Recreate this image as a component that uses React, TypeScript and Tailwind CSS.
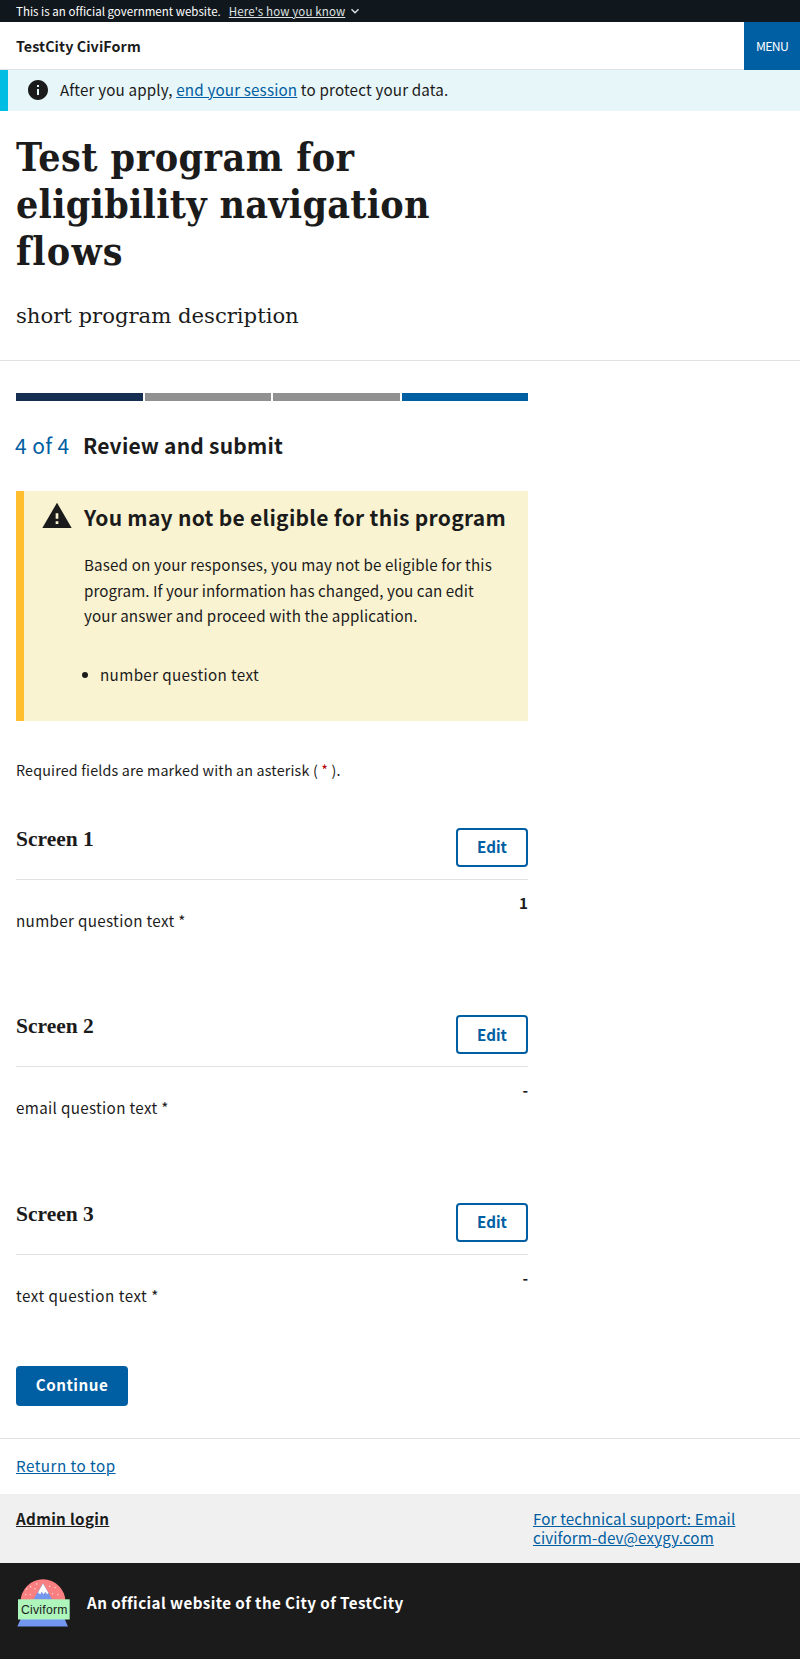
import type { ReactNode } from "react";

const sans = "font-['Noto_Sans_CJK_SC',sans-serif]";

function Rule() {
  return <div className="h-px bg-[#dfe1e2]" />;
}

function InfoIcon() {
  return (
    <svg className="h-6 w-6 shrink-0" viewBox="0 0 24 24" fill="#1b1b1b">
      <path d="M12 2C6.48 2 2 6.48 2 12s4.48 10 10 10 10-4.48 10-10S17.52 2 12 2zm1 15h-2v-6h2v6zm0-8h-2V7h2v2z" />
    </svg>
  );
}

function WarningIcon() {
  return (
    <svg className="h-8 w-8 shrink-0" viewBox="0 0 24 24" fill="#1b1b1b">
      <path d="M1 21h22L12 2 1 21zm12-3h-2v-2h2v2zm0-4h-2v-4h2v4z" />
    </svg>
  );
}

function Logo() {
  return (
    <svg className="h-[48px] w-[54px] shrink-0" viewBox="0 0 54 48">
      <circle cx="26" cy="22.8" r="22.5" fill="#fa7f81" />
      <path d="M26 4.2 L35.2 20.5 H16.4 Z" fill="#7396f0" />
      <path
        d="M26 4.2 L31.6 14 L30 15.4 L28.4 13 L26.6 15.6 L24.8 13 L23.2 15.6 L20.8 13.6 Z"
        fill="#fff"
        stroke="#8a8f9c"
        strokeWidth=".3"
      />
      <g fill="#fff" fillOpacity=".8">
        <circle cx="13.7" cy="7.7" r=".7" />
        <circle cx="19.7" cy="5" r=".7" />
        <circle cx="18" cy="9.7" r=".7" />
        <circle cx="9.7" cy="10" r=".7" />
        <circle cx="8.7" cy="15.6" r=".7" />
        <circle cx="13.3" cy="15.6" r=".7" />
        <circle cx="32.6" cy="7.3" r=".7" />
        <circle cx="38.3" cy="8.6" r=".7" />
        <circle cx="35.5" cy="14.6" r=".7" />
        <circle cx="41" cy="15.6" r=".7" />
      </g>
      <path d="M3.7 40 H47.7 L51 47.6 H0.3 Z" fill="#7396f0" />
      <rect x="1" y="20.3" width="51.7" height="20.2" fill="#adf5bb" />
      <text x="3.9" y="35.3" fontSize="12.2" fill="#1b1b1b" textLength="46.6" fontFamily="Liberation Sans, sans-serif">
        Civiform
      </text>
    </svg>
  );
}

function Link({ children, className = "" }: { children: ReactNode; className?: string }) {
  return (
    <a href="#" className={`text-[#005ea2] underline underline-offset-[1px] decoration-1 ${className}`}>
      {children}
    </a>
  );
}

function Section({ title, question, answer }: { title: string; question: ReactNode; answer: string }) {
  return (
    <section className="h-[187.4px]">
      <div className="flex h-[51px] items-start justify-between">
        <h3 className="font-['Liberation_Serif',serif] text-[21.5px] leading-[22px] font-bold">{title}</h3>
        <button className="h-[39px] w-[72px] rounded-[4px] border-2 border-[#005ea2] pb-px text-[15.2px] leading-none font-bold text-[#005ea2]">
          Edit
        </button>
      </div>
      <Rule />
      <div className="flex justify-between text-[15.2px] leading-[22px]">
        <p className="pt-[29px]">{question}</p>
        <p className="pt-[11px] font-bold">{answer}</p>
      </div>
    </section>
  );
}

export default function App() {
  return (
    <div className="min-h-[1659px] bg-white">
      <div className={`w-[800px] text-[15.2px] text-[#1b1b1b] ${sans}`}>
        <div className="flex h-[22px] items-center bg-[#11181d] px-4 text-[11.5px] leading-[22px] text-white">
          <span className="tracking-[0.02px]">This is an official government website.</span>
          <span className="ml-2 tracking-[0.13px] text-[#dfe1e2] underline decoration-1 underline-offset-[1px]">
            Here's how you know
          </span>
          <svg className="ml-[5px] h-2 w-2.5" viewBox="0 0 10 8" fill="none" stroke="#dfe1e2" strokeWidth="1.4">
            <path d="M1.5 2.2 L5 5.7 L8.5 2.2" />
          </svg>
        </div>

        <header className="flex h-12 justify-between">
          <div className="flex flex-1 items-center border-b border-[#dfe1e2] pl-4 text-[14.3px] font-bold tracking-[0.08px]">
            TestCity CiviForm
          </div>
          <button className="w-14 bg-[#005ea2] text-[12.2px] tracking-[-0.65px] text-white">MENU</button>
        </header>

        <div className="flex h-[41px] items-center border-l-8 border-[#00bde3] bg-[#e7f6f8] pb-px pl-[18px]">
          <InfoIcon />
          <p className="ml-[10px] pb-[2px] leading-[24px] tracking-[0.16px]">
            After you apply, <Link>end your session</Link> to protect your data.
          </p>
        </div>

        <div className="h-[249px] pt-[23px] pl-4">
          <h1 className="font-['DejaVu_Serif_Condensed','DejaVu_Serif',serif] text-[39px] leading-[46.85px] font-bold font-stretch-condensed">
            <span className="tracking-[0.5px]">Test program for</span>
            <br />
            <span className="tracking-[0.27px]">eligibility navigation</span>
            <br />
            <span className="tracking-[1.2px]">flows</span>
          </h1>
          <p className="mt-[25px] font-['DejaVu_Serif',serif] text-[21.2px] leading-[32px] tracking-[-0.02px]">
            short program description
          </p>
        </div>
        <Rule />

        <main className="h-[1077px] w-[528px] pt-8 pl-4">
          <div className="grid h-2 grid-cols-4 gap-[2px]">
            <div className="bg-[#162e51]" />
            <div className="bg-[#919191]" />
            <div className="bg-[#919191]" />
            <div className="bg-[#005ea2]" />
          </div>
          <h2 className="mt-[28px] flex h-[32px] text-[21px] leading-[32px] font-bold">
            <span className="-ml-px w-[68px] font-normal tracking-[0.4px] text-[#005ea2]">4 of 4</span>
            <span className="tracking-[0.2px]">Review and submit</span>
          </h2>

          <div className="mt-[30px] flex h-[230px] border-l-8 border-[#ffbe2e] bg-[#faf3d1] pt-[9px] pl-[17px]">
            <WarningIcon />
            <div className="ml-[11px]">
              <h3 className="-mt-px text-[21px] leading-[36px] font-bold tracking-[0.28px] whitespace-nowrap">
                You may not be eligible for this program
              </h3>
              <p className="mt-[17px] w-[420px] leading-[25.5px]">
                <span className="tracking-[0.13px]">Based on your responses, you may not be eligible for this</span>
                <br />
                <span className="tracking-[0.04px]">program. If your information has changed, you can edit</span>
                <br />
                <span className="tracking-[0.12px]">your answer and proceed with the application.</span>
              </p>
              <ul className="mt-[33px] leading-[25.5px]">
                <li className="flex items-center tracking-[0.36px]">
                  <span className="mt-[2px] mr-[12px] -ml-[2px] h-[6px] w-[6px] rounded-full bg-[#1b1b1b]" />
                  number question text
                </li>
              </ul>
            </div>
          </div>

          <p className="mt-[37px] mb-[46px] h-[24px] text-[14.3px] leading-[24px] tracking-[0.17px]">
            Required fields are marked with an asterisk ( <span className="text-[#b50909]">*</span> ).
          </p>

          <Section
            title="Screen 1"
            question={<span className="tracking-[0.33px]">number question text *</span>}
            answer="1"
          />
          <Section
            title="Screen 2"
            question={<span className="tracking-[0.33px]">email question text *</span>}
            answer="-"
          />
          <Section
            title="Screen 3"
            question={<span className="tracking-[0.5px]">text question text *</span>}
            answer="-"
          />

          <button className="-mt-[24px] block h-10 w-28 rounded-[4px] bg-[#005ea2] pb-[3px] text-[15.2px] leading-none font-bold tracking-[0.5px] text-white">
            Continue
          </button>
        </main>

        <Rule />
        <div className="h-[55px] pt-[14px] pl-4 leading-[24px]">
          <Link className="tracking-[0.47px]">Return to top</Link>
        </div>
        <div className="flex h-[69px] bg-[#f0f0f0] pt-[15px] pl-4 leading-[19px]">
          <a
            href="#"
            className="w-[517px] font-bold tracking-[0.33px] underline decoration-1 underline-offset-[1px]"
          >
            Admin login
          </a>
          <Link className="tracking-[0.13px]">
            For technical support: Email
            <br />
            civiform-dev@exygy.com
          </Link>
        </div>
        <footer className="flex h-24 bg-[#1b1b1b] pt-4 pl-[17px]">
          <Logo />
          <p className="ml-4 pt-[11px] leading-[24px] font-bold tracking-[0.41px] text-white">
            An official website of the City of TestCity
          </p>
        </footer>
      </div>
    </div>
  );
}
